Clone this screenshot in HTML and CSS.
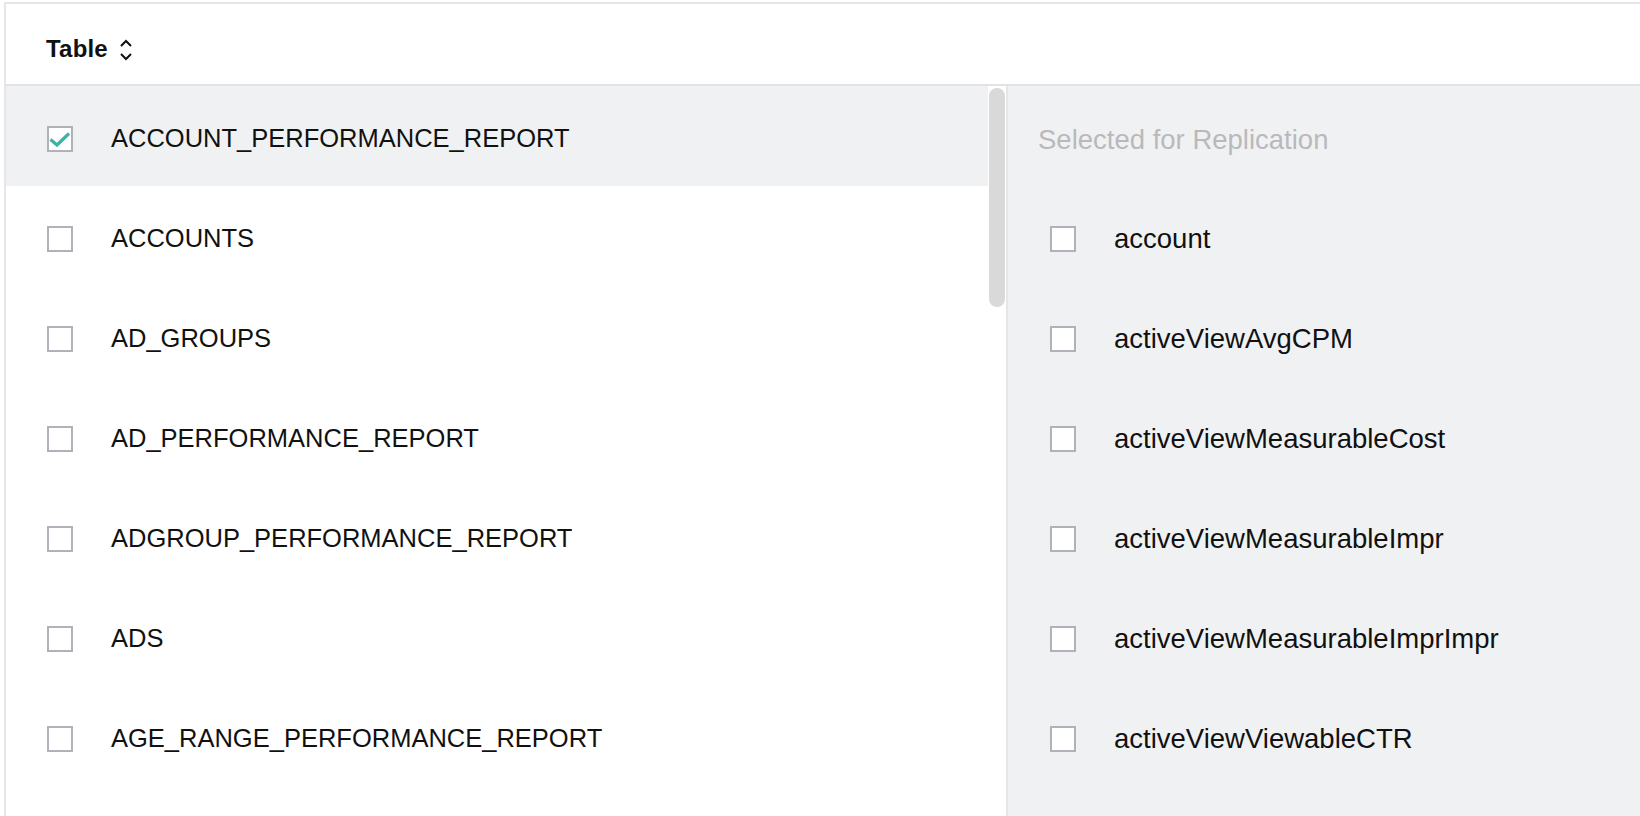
FILE: index.html
```html
<!DOCTYPE html>
<html>
<head>
<meta charset="utf-8">
<link rel="stylesheet" href="styles.css">
</head>
<body>
<div class="app">
  <div class="header">
    <span class="header-title">Table</span>
    <svg class="sort-icon" width="16" height="24" viewBox="0 0 16 24"><path d="M3 8 L8 3 L13 8" fill="none" stroke="#111" stroke-width="2"/><path d="M3 16 L8 21 L13 16" fill="none" stroke="#111" stroke-width="2"/></svg>
  </div>
  <div class="main">
    <div class="left">
      <div class="row selected">
        <span class="cb checked"><svg width="22" height="22" viewBox="0 0 22 22"><path d="M1.5 11.5 L8 17 L20 5.5" fill="none" stroke="#3bb3a6" stroke-width="3.2"/></svg></span>
        <span class="label upper">ACCOUNT_PERFORMANCE_REPORT</span>
      </div>
      <div class="row"><span class="cb"></span><span class="label upper">ACCOUNTS</span></div>
      <div class="row"><span class="cb"></span><span class="label upper">AD_GROUPS</span></div>
      <div class="row"><span class="cb"></span><span class="label upper">AD_PERFORMANCE_REPORT</span></div>
      <div class="row"><span class="cb"></span><span class="label upper">ADGROUP_PERFORMANCE_REPORT</span></div>
      <div class="row"><span class="cb"></span><span class="label upper">ADS</span></div>
      <div class="row"><span class="cb"></span><span class="label upper">AGE_RANGE_PERFORMANCE_REPORT</span></div>
      <div class="scroll-thumb"></div>
    </div>
    <div class="right">
      <div class="rrow heading">Selected for Replication</div>
      <div class="rrow"><span class="cb"></span><span class="label lower">account</span></div>
      <div class="rrow"><span class="cb"></span><span class="label lower">activeViewAvgCPM</span></div>
      <div class="rrow"><span class="cb"></span><span class="label lower">activeViewMeasurableCost</span></div>
      <div class="rrow"><span class="cb"></span><span class="label lower">activeViewMeasurableImpr</span></div>
      <div class="rrow"><span class="cb"></span><span class="label lower">activeViewMeasurableImprImpr</span></div>
      <div class="rrow"><span class="cb"></span><span class="label lower">activeViewViewableCTR</span></div>
    </div>
  </div>
</div>
</body>
</html>
```
FILE: styles.css
```css
html, body {
  margin: 0;
  padding: 0;
  background: #ffffff;
  overflow: hidden;
}
body {
  width: 1640px;
  height: 816px;
  font-family: "Liberation Sans", Arial, sans-serif;
  color: #111111;
}
.app {
  margin-top: 2px;
  margin-left: 4px;
  border-top: 2px solid #e6e6e8;
  border-left: 2px solid #e6e6e8;
  height: 812px;
  display: flex;
  flex-direction: column;
  overflow: hidden;
}
.header {
  height: 82px;
  flex: none;
  display: flex;
  align-items: center;
  padding-left: 40px;
  padding-top: 10px;
  box-sizing: border-box;
  border-bottom: 2px solid #e3e3e6;
  background: #ffffff;
}
.header-title {
  font-weight: bold;
  font-size: 24px;
  letter-spacing: 0.2px;
}
.sort-icon {
  margin-left: 10px;
  margin-top: 2px;
}
.main {
  flex: 1;
  display: flex;
  min-height: 0;
}
.left {
  position: relative;
  width: 1000px;
  flex: none;
  overflow: hidden;
  border-right: 2px solid #e6e6e9;
}
.row {
  height: 100px;
  box-sizing: border-box;
  padding-top: 5px;
  display: flex;
  align-items: center;
  padding-left: 41px;
  padding-right: 20px;
}
.row.selected {
  background: #f0f1f3;
  margin-right: 18px;
}
.cb {
  width: 22px;
  height: 22px;
  border: 2px solid #b1b1ba;
  background: #ffffff;
  flex: none;
  display: flex;
  align-items: center;
  justify-content: center;
}
.cb svg {
  display: block;
}
.label {
  margin-left: 38px;
  white-space: nowrap;
  color: #111111;
}
.upper {
  font-size: 25.5px;
}
.scroll-thumb {
  position: absolute;
  top: 2px;
  right: 1px;
  width: 16px;
  height: 219px;
  border-radius: 8px;
  background: #d9d9d9;
}
.right {
  flex: 1;
  background: #f0f1f3;
  overflow: hidden;
}
.rrow {
  height: 100px;
  box-sizing: border-box;
  padding-top: 5px;
  display: flex;
  align-items: center;
  padding-left: 42px;
  white-space: nowrap;
}
.rrow.heading {
  padding-left: 30px;
  color: #b9b9bc;
  font-size: 27.5px;
  padding-top: 8px;
}
.lower {
  font-size: 27.5px;
}
```
